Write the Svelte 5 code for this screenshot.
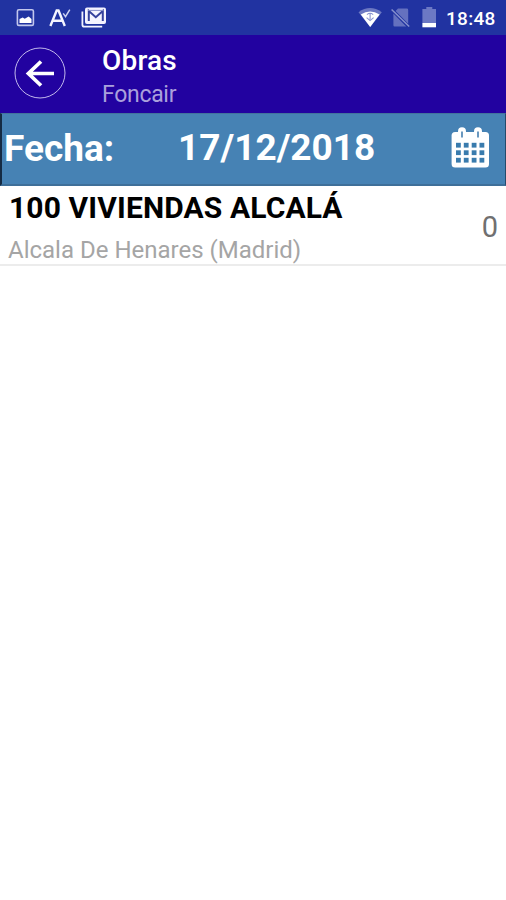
<script>
  const works = [
    { name: '100 VIVIENDAS ALCALÁ', place: 'Alcala De Henares (Madrid)', count: 0 }
  ];
  const columns = [456, 463.8, 471.7, 479.5];
  const rows = [142.8, 150.3, 157.8];
</script>

<div class="screen">
  <div class="status">
    <svg class="left" width="130" height="35" viewBox="0 0 130 35">
      <rect x="17.4" y="9.8" width="16" height="15.6" rx="1.5" fill="none" stroke="#c2c7ed" stroke-width="1.6" />
      <path d="M19.5 23v-4l3.2-1.6 2 1.4 4-2.4 2.8 2.7V23z" fill="#fff" />
      <path d="M50.4 26 56.7 10.5h1.8L64.8 26M52.8 20.7h9.6" fill="none" stroke="#f4f4ff" stroke-width="2.4" />
      <path d="m63.2 13.4 2.3 3.2 4.3-7" fill="none" stroke="#cdd1f1" stroke-width="1.5" />
      <path d="M82.4 11.5v13.2q0 2 2 2h17.8" fill="none" stroke="#f1f2ff" stroke-width="1.8" />
      <rect x="85" y="7.5" width="21" height="16.5" rx="2" fill="#f4f4ff" />
      <path d="M88.8 21V11l7 6.2 7-6.2v10" fill="none" stroke="#35429d" stroke-width="2" />
      <path d="M88 10.4h15.6" stroke="#8790ca" stroke-width="1" />
    </svg>
    <svg class="right" width="88" height="35" viewBox="354 0 88 35">
      <path d="M358.5 12.2Q370 3.8 381.8 12.2L370.2 27z" fill="#6c78c2" />
      <path d="M360.8 14.4Q370 8.8 379.6 14.4L370.2 27z" fill="#fff" />
      <path d="M367 14.6q3-2.6 6.2 0M366.6 17.6l3.5 3 3.5-3M370.1 13.5v6" fill="none" stroke="#8c96d0" stroke-width="1.1" />
      <path d="M398 8.6h8.8q1.4 0 1.4 1.4v13.8L395.6 11zM393.4 13.4 406.2 26.4h-11.6q-1.2 0-1.2-1.2z" fill="#6571bf" />
      <path d="m391.6 9.5 17.6 17" stroke="#8791cd" stroke-width="1.5" />
      <path d="M426.3 7h6v2h3.7v14h-13.6V9h3.9z" fill="#6c78c4" />
      <rect x="422.4" y="23" width="13.6" height="4.3" fill="#fff" />
    </svg>
    <span class="clock">18:48</span>
  </div>

  <header>
    <button aria-label="Volver">
      <svg width="52" height="52" viewBox="0 0 52 52">
        <circle cx="26" cy="26" r="25" fill="none" stroke="#c2b9ec" stroke-width="1" />
        <path d="M40 26.5H14M27 14.5 14.4 26.5 27 38.5" fill="none" stroke="#fff" stroke-width="3.7" />
      </svg>
    </button>
    <div class="heading">
      <h1>Obras</h1>
      <p>Foncair</p>
    </div>
  </header>

  <section class="date">
    <span class="label">Fecha:</span>
    <span class="value">17/12/2018</span>
    <svg width="40" height="42" viewBox="450 126 40 42">
      <rect x="451.6" y="132" width="37.4" height="35.6" rx="3.5" fill="#fff" />
      <rect x="458" y="127.2" width="8" height="14" rx="4" fill="#fff" />
      <rect x="474" y="127.2" width="8" height="14" rx="4" fill="#fff" />
      <path d="M462 131.5v6M478 131.5v6" stroke="#5b8eb9" stroke-width="1.8" />
      {#each rows as y}
        {#each columns as x}
          <rect {x} {y} width="4.8" height="4.8" fill="#397bad" />
        {/each}
      {/each}
    </svg>
  </section>

  <main>
    {#each works as work}
      <article>
        <div>
          <h2>{work.name}</h2>
          <p>{work.place}</p>
        </div>
        <span class="count">{work.count}</span>
      </article>
    {/each}
  </main>
</div>

<style>
  .screen { width: 506px; height: 900px; background: #fff; font-family: Roboto, sans-serif; overflow: hidden; }
  h1, h2, p { margin: 0; white-space: nowrap; }
  svg { display: block; flex: none; }
  .status { height: 35px; background: #2133a1; display: flex; align-items: center; color: #fff; }
  .right { margin-left: 224px; }
  .clock { font-size: 19px; font-weight: 500; line-height: 35px; padding: 2px 0 0 4px; letter-spacing: .3px; }
  header { height: 78px; background: #2202a0; display: flex; box-sizing: border-box; padding: 12px 0 0 14px; }
  button { width: 52px; height: 52px; padding: 0; border: 0; background: none; }
  .heading { padding-left: 36px; }
  h1 { color: #fff; font-size: 28px; line-height: 30px; font-weight: 500; margin-top: -1px; letter-spacing: .2px; }
  .heading p { color: #aaa0dc; font-size: 23px; line-height: 28px; margin-top: 5px; letter-spacing: -.3px; }
  .date { height: 73px; box-sizing: border-box; background: #4682b4; border-left: 2px solid #152b43; border-right: 1px solid #254a6b; border-top: 1px solid #42739c; border-bottom: 2px solid #3e6f99; display: flex; align-items: center; color: #fff; font-weight: 700; white-space: nowrap; }
  .label { width: 174px; padding: 0 0 1px 2px; font-size: 37px; box-sizing: border-box; }
  .value { width: 274px; padding: 0 0 3px 2px; font-size: 37px; box-sizing: border-box; }
  .date svg { margin-top: -5px; }
  article { height: 80px; box-sizing: border-box; border-bottom: 2px solid #ececec; display: flex; justify-content: space-between; padding: 0 8px; }
  h2 { color: #000; font-size: 30px; line-height: 34px; font-weight: 700; padding: 5px 0 0 1px; letter-spacing: .13px; }
  article p { color: #a5a5a5; font-size: 24px; line-height: 30px; padding-top: 10px; }
  .count { color: #707070; font-size: 29px; line-height: 34px; padding-top: 24px; }
</style>
